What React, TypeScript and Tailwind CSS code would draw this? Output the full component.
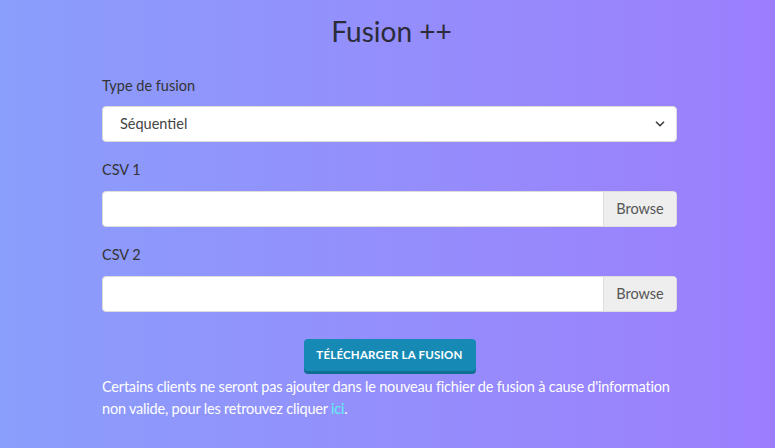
import { ChevronDown } from "lucide-react";

export default function App() {
  return (
    <div
      className="h-[448px] w-full overflow-hidden bg-linear-to-r from-[#8a9efb] to-[#9c7efd] text-[#333]"
      style={{ fontFamily: "Lato, 'Open Sans', sans-serif" }}
    >
      <div className="ml-[102px] w-[575px] pt-[12px]">
        <h1 className="ml-[4px] text-center text-[28px] leading-[38px] text-[#2b2b3a]">Fusion ++</h1>

        <div className="mt-[26px]">
          <label className="block text-[14.5px] leading-[20px] text-[#333]">Type de fusion</label>
          <div className="mt-[10px] flex h-[36px] items-center justify-between rounded-[4px] border border-[#ddd] bg-white pl-[17px] pr-[9px]">
            <span className="text-[14.5px] text-[#444]">Séquentiel</span>
            <ChevronDown size={14} strokeWidth={3} className="text-[#444]" />
          </div>
        </div>

        {["CSV 1", "CSV 2"].map((l) => (
          <div key={l} className="mt-[18px]">
            <label className="block text-[14.5px] leading-[20px] text-[#333]">{l}</label>
            <div className="mt-[11px] flex h-[36px] overflow-hidden rounded-[4px] border border-[#ddd] bg-white">
              <div className="flex-1" />
              <div className="flex w-[73px] items-center justify-center border-l border-[#ddd] bg-[#eeeeee] text-[14.5px] text-[#555]">
                Browse
              </div>
            </div>
          </div>
        ))}

        <div className="mt-[27px] flex justify-center">
          <button className="h-[32px] w-[172px] rounded-[4px] bg-[#168ab5] text-[11.5px] font-bold tracking-[0.2px] text-white shadow-[0_3px_0_#0f6f93]">
            TÉLÉCHARGER LA FUSION
          </button>
        </div>

        <p className="mt-[5px] text-[14.5px] leading-[22px] tracking-[-0.2px] text-white">
          Certains clients ne seront pas ajouter dans le nouveau fichier de fusion à cause d'information non valide, pour les retrouvez cliquer <span className="text-[#5ff0f0]">ici</span>.
        </p>
      </div>
    </div>
  );
}
